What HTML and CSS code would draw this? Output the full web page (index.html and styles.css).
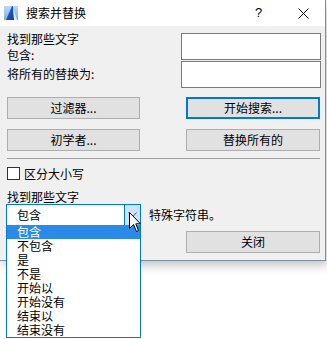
FILE: index.html
```html
<!DOCTYPE html>
<html lang="zh">
<head>
  <meta charset="UTF-8">
  <title>搜索并替换</title>
  <link rel="stylesheet" href="styles.css">
</head>
<body>
  <div class="window">
    <div class="titlebar">
      <svg class="app-icon" width="14" height="14" viewBox="0 0 14 14">
        <defs>
          <linearGradient id="sky" x1="0" y1="0" x2="0" y2="1">
            <stop offset="0" stop-color="#bcd8f4"/>
            <stop offset="1" stop-color="#7fb1e6"/>
          </linearGradient>
          <linearGradient id="sail" x1="0" y1="0" x2="1" y2="1">
            <stop offset="0" stop-color="#2f6fd0"/>
            <stop offset="1" stop-color="#0b3d9c"/>
          </linearGradient>
        </defs>
        <rect x="0" y="0" width="14" height="14" fill="url(#sky)"/>
        <path d="M2 14 L8 0 L9 0 L10 14 Z" fill="url(#sail)"/>
        <path d="M10 14 L9 2 L13 14 Z" fill="#ffffff" opacity="0.7"/>
      </svg>
      <span class="title">搜索并替换</span>
      <span class="tb-help">?</span>
      <svg class="tb-close" width="11" height="11" viewBox="0 0 11 11">
        <path d="M0.5 0.5 L10.5 10.5 M10.5 0.5 L0.5 10.5" stroke="#111" stroke-width="1"/>
      </svg>
    </div>

    <div class="content">
      <div class="find-row">
        <div class="labels">
          <div class="label-find">找到那些文字<br>包含:</div>
          <div class="label-replace">将所有的替换为:</div>
        </div>
        <div class="inputs">
          <div class="textbox"></div>
          <div class="textbox"></div>
        </div>
      </div>

      <div class="btn-row">
        <div class="btn">过滤器...</div>
        <div class="btn btn-default">开始搜索...</div>
      </div>
      <div class="btn-row second">
        <div class="btn">初学者...</div>
        <div class="btn">替换所有的</div>
      </div>

      <div class="separator"></div>

      <div class="check-row">
        <span class="checkbox"></span>
        <span>区分大小写</span>
      </div>

      <div class="label-mode">找到那些文字</div>
      <div class="mode-row">
        <div class="combo">
          <span class="combo-text">包含</span>
          <span class="combo-arrow">
            <svg width="9" height="6" viewBox="0 0 9 6">
              <path d="M0.5 0.5 L4.5 5 L8.5 0.5" fill="none" stroke="#555" stroke-width="1"/>
            </svg>
          </span>
        </div>
        <span class="mode-text">特殊字符串。</span>
      </div>

      <div class="close-row">
        <div class="btn">关闭</div>
      </div>

      <ul class="combo-list">
        <li class="selected">包含</li>
        <li>不包含</li>
        <li>是</li>
        <li>不是</li>
        <li>开始以</li>
        <li>开始没有</li>
        <li>结束以</li>
        <li>结束没有</li>
      </ul>

      <svg class="cursor" width="13" height="21" viewBox="0 0 13 21">
        <path d="M0.5 0.5 L0.5 16.5 L4.5 12.5 L7.5 19.5 L9.5 18.5 L6.8 11.8 L11.5 11.8 Z" fill="#fff" stroke="#000" stroke-width="1" stroke-linejoin="miter"/>
      </svg>
    </div>
  </div>
</body>
</html>
```

FILE: styles.css
```css
html, body {
  margin: 0;
  min-height: 339px;
}
body {
  background: #ffffff;
  font-family: "Noto Sans CJK SC", "Liberation Sans", sans-serif;
  font-size: 12px;
  color: #000;
}
.window {
  width: 325px;
  height: 260px;
  border-right: 1px solid #7790ab;
  border-bottom: 1px solid #7790ab;
  box-shadow: 2px 4px 10px rgba(0,0,0,0.25);
  background: #f0f0f0;
}
.titlebar {
  height: 26px;
  background: #ffffff;
  display: flex;
  align-items: center;
  position: relative;
}
.app-icon {
  margin-left: 4px;
  margin-top: -1px;
}
.title {
  margin-left: 8px;
  color: #000;
  line-height: 16px;
}
.tb-help {
  position: absolute;
  left: 255px;
  top: 5px;
  font-family: "Liberation Sans", sans-serif;
  font-size: 13px;
}
.tb-close {
  position: absolute;
  left: 298px;
  top: 8px;
}
.content {
  position: relative;
  padding: 5px 4px 0 7px;
}
.find-row {
  display: flex;
  justify-content: space-between;
}
.labels {
  line-height: 16px;
}
.label-replace {
  margin-top: 3px;
}
.inputs {
  display: flex;
  flex-direction: column;
  gap: 1px;
  padding-top: 2px;
}
.textbox {
  width: 138px;
  height: 25px;
  background: #fff;
  border: 1px solid #7a7a7a;
}
.btn-row {
  display: flex;
  justify-content: space-between;
  margin-top: 9px;
  padding-right: 1px;
}
.btn-row.second {
  margin-top: 10px;
}
.btn {
  width: 131px;
  height: 20px;
  border: 1px solid #adadad;
  background: #e1e1e1;
  display: flex;
  align-items: center;
  justify-content: center;
  line-height: 16px;
}
.btn-row .btn:last-child {
  width: 132px;
}
.btn-default {
  border: 2px solid #0078d7;
  width: 130px !important;
  height: 18px;
}
.separator {
  height: 1px;
  background: #a0a0a0;
  margin: 7px 1px 0 0;
}
.check-row {
  display: flex;
  align-items: center;
  gap: 4px;
  margin-top: 8px;
  height: 13px;
  line-height: 16px;
}
.checkbox {
  width: 11px;
  height: 11px;
  border: 1px solid #333;
  background: #fff;
}
.label-mode {
  margin-top: 10px;
  line-height: 14px;
}
.mode-row {
  display: flex;
  align-items: center;
  margin-left: -1px;
}
.combo {
  width: 133px;
  height: 20px;
  border: 1px solid #0078d7;
  background: #fff;
  display: flex;
  align-items: center;
}
.combo-text {
  flex: 1;
  padding-left: 10px;
  line-height: 16px;
}
.combo-arrow {
  width: 15px;
  height: 20px;
  background: #cce4f7;
  border-left: 1px solid #0078d7;
  display: flex;
  align-items: center;
  justify-content: center;
}
.mode-text {
  margin-left: 8px;
  line-height: 16px;
}
.close-row {
  display: flex;
  justify-content: flex-end;
  margin-top: 5px;
  padding-right: 1px;
}
.close-row .btn {
  width: 132px;
}
.combo-list {
  position: absolute;
  left: 6px;
  top: 199px;
  width: 133px;
  margin: 0;
  padding: 0;
  list-style: none;
  background: #fff;
  border: 1px solid #0078d7;
  border-top: none;
}
.combo-list li {
  height: 14px;
  line-height: 14px;
  padding-left: 10px;
}
.combo-list li.selected {
  background: #2b8ae8;
  color: #fff;
}
.cursor {
  position: absolute;
  left: 129px;
  top: 186px;
}
```
